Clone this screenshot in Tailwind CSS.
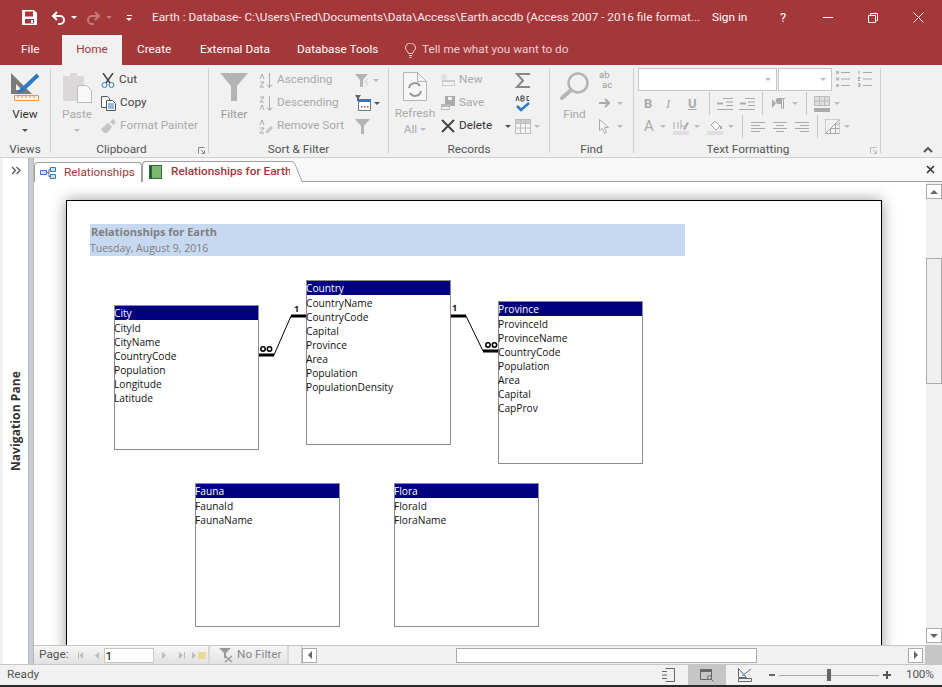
<!DOCTYPE html>
<html lang="en">

<head>
    <meta charset="UTF-8" />
    <title>Earth : Database</title>
    <script src="https://cdn.jsdelivr.net/npm/@tailwindcss/browser@4"></script>
</head>

<body class="w-[942px] h-[687px] overflow-hidden flex flex-col bg-[#f1f1f1] font-['Roboto',sans-serif] text-[11.8px] text-[#444]">
    <!-- Title bar -->
    <header class="h-[35px] shrink-0 bg-[#a4373a] text-white flex items-center">
        <div class="w-[152px] flex items-center shrink-0">
            <svg class="ml-[22px] w-[15px] h-[15px]" viewBox="0 0 15 15"><path fill="#fff" d="M0 0h12l3 3v12H0z"/><path fill="#a4373a" d="M3 1.500h8v5H3zM3 9h9v4.500H3z"/><path fill="#fff" d="M9 10h2v3H9z"/></svg>
            <svg class="ml-[14px] w-[15px] h-[14px]" viewBox="0 0 15 14" fill="none" stroke="#fff" stroke-width="2"><path d="M6 1 2 5l4 4"/><path d="M2 5h7a4 4 0 0 1 0 8H7"/></svg>
            <span class="ml-[5px] w-0 h-0 border-x-[3px] border-x-transparent border-t-[3px] border-t-white"></span>
            <svg class="ml-[9px] w-[15px] h-[14px]" viewBox="0 0 15 14" fill="none" stroke="#c47a7c" stroke-width="2"><path d="m9 1 4 4-4 4"/><path d="M13 5H6a4 4 0 0 0 0 8h2"/></svg>
            <span class="ml-[5px] w-0 h-0 border-x-[3px] border-x-transparent border-t-[3px] border-t-[#c47a7c]"></span>
            <span class="ml-[14px] flex flex-col items-center gap-[2px]"><span class="w-[5px] h-px bg-white"></span><span class="w-0 h-0 border-x-[3px] border-x-transparent border-t-[3px] border-t-white"></span></span>
        </div>
        <div class="w-[560px] shrink-0 whitespace-nowrap text-[#f7e9e9]">Earth : Database- C:\Users\Fred\Documents\Data\Access\Earth.accdb (Access 2007 - 2016 file format...</div>
        <div class="w-[68px] shrink-0">Sign in</div>
        <div class="w-[43px] shrink-0 text-[13px]">?</div>
        <div class="w-[45px] shrink-0"><div class="w-[10px] h-px bg-white"></div></div>
        <svg class="w-[10px] h-[10px] shrink-0 mr-[35px]" viewBox="0 0 10 10" fill="none" stroke="#fff"><path d="M.5 2.500h7v7h-7zM2.500 2.500v-2h7v7h-2"/></svg>
        <svg class="w-[11px] h-[11px] shrink-0" viewBox="0 0 11 11" fill="none" stroke="#fff"><path d="m.5.500 10 10M10.500.5l-10 10"/></svg>
    </header>

    <!-- Tabs -->
    <nav class="h-[30px] shrink-0 bg-[#a4373a] text-white flex items-center">
        <div class="w-[62px] pl-[21px]">File</div>
        <div class="w-[60px] h-[30px] flex items-center justify-center bg-[#f1f1f1] text-[#a4373a]">Home</div>
        <div class="w-[78px] pl-[15px]">Create</div>
        <div class="w-[97px]">External Data</div>
        <div class="w-[108px]">Database Tools</div>
        <div class="flex items-center text-[#ecd0d1]">
            <svg class="w-[11px] h-[15px] mr-[6px]" viewBox="0 0 11 15" fill="none" stroke="#f3dcdc"><path d="M3.500 10.500C3 8 .5 7.500.5 5a5 5 0 0 1 10 0c0 2.500-2.500 3-3 5.500zM4 12.500h3M4.500 14.500h2"/></svg>
            Tell me what you want to do
        </div>
    </nav>

    <!-- Ribbon -->
    <section class="h-[93px] shrink-0 flex pt-[3px] pb-[4px] border-b border-[#d0d0d0] relative">
        <!-- Views -->
        <div class="w-[51px] shrink-0 pt-[1px] flex flex-col items-center border-r border-[#d0d0d0] text-[#333]">
            <svg class="w-[30px] h-[30px] mt-[3px]" viewBox="0 0 30 30"><path fill="#7a7a7a" d="M1 1v21h21z"/><path fill="#f1f1f1" d="M6 12v6h6z"/><path fill="none" stroke="#2b79c2" stroke-width="4" d="m28 3-17 16"/><path fill="#2b79c2" d="m8 19 3-3 2 3-5 3z"/><path fill="none" stroke="#e8994a" d="M4.500 23.500h24v5h-24zM8 24v2M12 24v2M16 24v2M20 24v2M24 24v2"/></svg>
            <div class="mt-[4px] leading-[16px]">View</div>
            <span class="mt-[7px] w-0 h-0 border-x-[3px] border-x-transparent border-t-[3px] border-t-[#555]"></span>
            <div class="mt-auto -mb-[4px] leading-[16px] text-[#555]">Views</div>
        </div>

        <!-- Clipboard -->
        <div class="w-[158px] shrink-0 pt-[1px] flex flex-col border-r border-[#d0d0d0] relative">
            <div class="flex flex-1 text-[#aaa]">
                <div class="w-[50px] flex flex-col items-center pl-[2px]">
                    <svg class="w-[29px] h-[30px] mt-[4px]" viewBox="0 0 29 30"><path fill="#dcd7d8" d="M0 3h7V0h7v3h7v25H0z"/><path fill="#f8f8f8" stroke="#bbb" d="M14.500 12.500h9l5 5v12h-14z"/></svg>
                    <div class="mt-[3px] leading-[16px]">Paste</div>
                    <span class="mt-[7px] w-0 h-0 border-x-[3px] border-x-transparent border-t-[3px] border-t-[#bbb]"></span>
                </div>
                <div class="flex flex-col pt-[3px] gap-[7px]">
                    <div class="h-[16px] flex items-center gap-[4px] text-[#444]">
                        <svg class="w-[14px] h-[15px]" viewBox="0 0 14 15" fill="none"><path stroke="#444" stroke-width="1.500" d="m2 0 7 10M12 0 5 10"/><circle cx="3.500" cy="12" r="2.500" stroke="#2b79c2"/><circle cx="10.500" cy="12" r="2.500" stroke="#2b79c2"/></svg>Cut
                    </div>
                    <div class="h-[16px] flex items-center gap-[4px] text-[#444]">
                        <svg class="w-[15px] h-[15px]" viewBox="0 0 15 15" fill="none" stroke="#555"><path fill="#fff" d="M.5.500h6l2 2v9h-8z"/><path fill="#fff" d="M5.500 4.500h6l3 3v7h-9z"/><path stroke="#2b79c2" d="M7 8h6M7 10h6M7 12h6"/></svg>Copy
                    </div>
                    <div class="h-[16px] flex items-center gap-[4px]">
                        <svg class="w-[15px] h-[14px]" viewBox="0 0 15 14"><path fill="#c4c4c4" d="M0 10 7 4l4 4-5 6H3zM9 3l3-3 3 3-3 3z"/></svg>Format Painter
                    </div>
                </div>
            </div>
            <div class="-mb-[4px] leading-[16px] text-center text-[#555] pr-[16px]">Clipboard</div>
            <svg class="absolute right-[3px] -bottom-[1px] w-[7px] h-[7px]" viewBox="0 0 7 7" fill="none" stroke="#888"><path d="M.5 6.500v-6h6M3 3l3.500 3.500M6.500 3.500v3h-3"/></svg>
        </div>

        <!-- Sort & Filter -->
        <div class="w-[180px] shrink-0 pt-[1px] flex flex-col border-r border-[#d0d0d0] text-[#aaa]">
            <div class="flex flex-1">
                <div class="w-[50px] flex flex-col items-center">
                    <svg class="w-[28px] h-[28px] mt-[4px]" viewBox="0 0 28 28"><path fill="#b4b4b4" d="M0 0h28L17 13v15h-6V13z"/></svg>
                    <div class="mt-[5px] leading-[16px] text-[#999]">Filter</div>
                </div>
                <div class="w-[96px] flex flex-col pt-[3px] gap-[7px]">
                    <div class="h-[16px] flex items-center gap-[4px]">
                        <svg class="w-[14px] h-[15px]" viewBox="0 0 14 15" fill="none" stroke="#aaa"><path d="M1 6 3 1l2 5M1 9h4L1 14h4M10.500 0v14M8 11.500l2.500 3 2.500-3"/></svg>Ascending
                    </div>
                    <div class="h-[16px] flex items-center gap-[4px]">
                        <svg class="w-[14px] h-[15px]" viewBox="0 0 14 15" fill="none" stroke="#aaa"><path d="M1 1h4L1 6h4M1 14l2-5 2 5M10.500 0v14M8 11.500l2.500 3 2.500-3"/></svg>Descending
                    </div>
                    <div class="h-[16px] flex items-center gap-[4px]">
                        <svg class="w-[14px] h-[15px]" viewBox="0 0 14 15" fill="none" stroke="#aaa"><path d="M1 6 3 1l2 5M1 9h4l-4 5h4"/><path fill="#c4c4c4" stroke="none" d="m7 12 5-5 2 2-5 5H7z"/></svg>Remove Sort
                    </div>
                </div>
                <div class="flex flex-col pt-[3px] gap-[7px]">
                    <div class="h-[16px] flex items-center gap-[3px]">
                        <svg class="w-[15px] h-[15px]" viewBox="0 0 15 15"><path fill="#b4b4b4" d="M0 1h13L8 7v7H5V7z"/><path fill="#ddd" d="m10 7 3-2-1 4h2l-4 6 1-5H9z"/></svg>
                        <span class="w-0 h-0 border-x-[3px] border-x-transparent border-t-[3px] border-t-[#bbb]"></span>
                    </div>
                    <div class="h-[16px] flex items-center gap-[3px]">
                        <svg class="w-[16px] h-[16px]" viewBox="0 0 16 16"><path fill="#666" d="M0 0h6L4 3v3H2V3z"/><path fill="#fff" stroke="#777" d="M3.500 5.500h12v10h-12z"/><path fill="#2b79c2" d="M3 4h13v3H3z"/><path fill="#666" d="M6 11h1.500v1.500H6zM9 11h1.500v1.500H9zM12 11h1.500v1.500H12z"/></svg>
                        <span class="w-0 h-0 border-x-[3px] border-x-transparent border-t-[3px] border-t-[#555]"></span>
                    </div>
                    <div class="h-[16px] flex items-center">
                        <svg class="w-[15px] h-[15px]" viewBox="0 0 15 15"><path fill="#b4b4b4" d="M0 0h15L9 7v8H6V7z"/></svg>
                    </div>
                </div>
            </div>
            <div class="-mb-[4px] leading-[16px] text-center text-[#555]">Sort &amp; Filter</div>
        </div>

        <!-- Records -->
        <div class="w-[161px] shrink-0 pt-[1px] flex flex-col border-r border-[#d0d0d0] text-[#aaa]">
            <div class="flex flex-1">
                <div class="w-[52px] flex flex-col items-center">
                    <svg class="w-[24px] h-[30px] mt-[3px]" viewBox="0 0 24 30" fill="none" stroke="#b4b4b4"><path d="M.5.500h14l9 9v19H.5z" fill="#f6f6f6"/><path d="M14.500.5v9h9"/><path stroke-width="2" stroke="#999" d="M6 16a6 6 0 0 1 11-2M18 19a6 6 0 0 1-11 2"/></svg>
                    <div class="mt-[3px] leading-[16px]">Refresh</div>
                    <div class="leading-[16px] flex items-center gap-[3px]">All<span class="w-0 h-0 border-x-[3px] border-x-transparent border-t-[3px] border-t-[#bbb]"></span></div>
                </div>
                <div class="w-[74px] flex flex-col pt-[3px] gap-[7px]">
                    <div class="h-[16px] flex items-center gap-[4px]">
                        <svg class="w-[14px] h-[14px]" viewBox="0 0 14 14"><path fill="#ccc" d="M1 7h13v6H1z"/><path fill="#f1f1f1" d="M2 9h11v3H2z"/><path fill="#ddd" d="M3 0l1 2 2-1-1 2 2 1-2 1 1 2-2-1-1 2-1-2-2 1 1-2-2-1 2-1-1-2 2 1z"/></svg>New
                    </div>
                    <div class="h-[16px] flex items-center gap-[4px]">
                        <svg class="w-[14px] h-[15px]" viewBox="0 0 14 15"><path fill="#aaa" d="M4 0h10v10H4z"/><path fill="#f1f1f1" d="M7 1h4v3H7z"/><path fill="#bbb" d="M0 8h9v6H0z"/><path fill="#f1f1f1" d="M1 11h7v2H1z"/></svg>Save
                    </div>
                    <div class="h-[16px] flex items-center gap-[4px] text-[#333]">
                        <svg class="w-[14px] h-[14px]" viewBox="0 0 14 14" fill="none" stroke="#444" stroke-width="2"><path d="m1 1 12 12M13 1 1 13"/></svg>Delete
                        <span class="ml-[9px] w-0 h-0 border-x-[3px] border-x-transparent border-t-[3px] border-t-[#555]"></span>
                    </div>
                </div>
                <div class="flex flex-col pt-[3px] gap-[7px]">
                    <div class="h-[16px] flex items-center">
                        <svg class="w-[15px] h-[15px]" viewBox="0 0 15 15" fill="none" stroke="#888" stroke-width="2"><path d="M15 2V1H2l6 6.500L2 14h13v-1"/></svg>
                    </div>
                    <div class="h-[16px] flex items-center">
                        <svg class="w-[15px] h-[18px]" viewBox="0 0 15 18" fill="none"><path stroke="#2b79c2" stroke-width="2.500" d="m2 12 4 4 8-7"/><path stroke="#444" d="M1 7l1.500-5L4 7M6 2v5h2a1 1 0 0 0 0-2.500H6 8a1 1 0 0 0 0-2.500zM14 2.500h-2v4h2"/></svg>
                    </div>
                    <div class="h-[16px] flex items-center gap-[3px]">
                        <svg class="w-[16px] h-[15px]" viewBox="0 0 16 15" fill="#f6f6f6" stroke="#bbb"><path d="M.5.500h15v14H.5z"/><path fill="#ccc" d="M.5.500h15v4H.5z"/><path d="M.5 9h15M5.500.5v14M10.500.5v14"/></svg>
                        <span class="w-0 h-0 border-x-[3px] border-x-transparent border-t-[3px] border-t-[#bbb]"></span>
                    </div>
                </div>
            </div>
            <div class="-mb-[4px] leading-[16px] text-center text-[#555]">Records</div>
        </div>

        <!-- Find -->
        <div class="w-[84px] shrink-0 pt-[1px] flex flex-col border-r border-[#d0d0d0] text-[#aaa]">
            <div class="flex flex-1">
                <div class="w-[49px] flex flex-col items-center">
                    <svg class="w-[29px] h-[28px] mt-[3px]" viewBox="0 0 29 28" fill="none" stroke="#b4b4b4"><circle cx="18" cy="11" r="9.500" stroke-width="2.500"/><path stroke-width="4" stroke-linecap="round" d="m10 19-8 7"/></svg>
                    <div class="mt-[6px] leading-[16px]">Find</div>
                </div>
                <div class="flex flex-col pt-[3px] gap-[7px]">
                    <div class="h-[16px] flex flex-col justify-center text-[#999] text-[9.500px] leading-[10px]"><span>ab</span><span class="pl-[3px]">ac</span></div>
                    <div class="h-[16px] flex items-center gap-[6px]">
                        <svg class="w-[12px] h-[10px]" viewBox="0 0 12 10" fill="none" stroke="#aaa" stroke-width="2"><path d="M0 5h10M6 1l4 4-4 4"/></svg>
                        <span class="w-0 h-0 border-x-[3px] border-x-transparent border-t-[3px] border-t-[#bbb]"></span>
                    </div>
                    <div class="h-[16px] flex items-center gap-[6px]">
                        <svg class="w-[10px] h-[15px]" viewBox="0 0 10 15" fill="#f6f6f6" stroke="#aaa"><path d="M.5.500v11l3-2 2 5 2-1-2-5h4z"/></svg>
                        <span class="ml-[2px] w-0 h-0 border-x-[3px] border-x-transparent border-t-[3px] border-t-[#bbb]"></span>
                    </div>
                </div>
            </div>
            <div class="-mb-[4px] leading-[16px] text-center text-[#555]">Find</div>
        </div>

        <!-- Text Formatting -->
        <div class="w-[247px] shrink-0 flex flex-col border-r border-[#d0d0d0] text-[#aaa] relative">
            <div class="flex flex-col flex-1 pl-[4px]">
                <div class="flex items-start">
                    <div class="w-[139px] h-[23px] bg-white border border-[#c6c6c6] flex items-center justify-end pr-[5px]"><span class="w-0 h-0 border-x-[3px] border-x-transparent border-t-[3px] border-t-[#bbb]"></span></div>
                    <div class="ml-[1px] w-[54px] h-[23px] bg-white border border-[#c6c6c6] flex items-center justify-end pr-[5px]"><span class="w-0 h-0 border-x-[3px] border-x-transparent border-t-[3px] border-t-[#bbb]"></span></div>
                    <svg class="ml-[4px] mt-[3px] w-[14px] h-[16px]" viewBox="0 0 14 16" fill="none" stroke="#aaa"><path d="M5 1.500h9M5 8h9M5 14.500h9"/><path stroke-width="3" stroke="#bbb" stroke-dasharray="3 3.500" d="M1.500 0v16"/></svg>
                    <svg class="ml-[8px] mt-[3px] w-[14px] h-[16px]" viewBox="0 0 14 16" fill="none" stroke="#aaa"><path d="M5 1.500h9M5 8h9M5 14.500h9M1 0v3M0 6.500h2v1H0v2h2M0 12.500h2v3H0M0 14h2"/></svg>
                </div>
                <div class="flex items-center h-[23px] mt-[1px] pl-[6px] font-bold text-[13px] text-[#aaa]">
                    <span class="w-[22px]">B</span><span class="w-[22px] italic font-normal font-['Liberation_Serif',serif]">I</span><span class="w-[21px] underline">U</span>
                    <span class="w-px h-[23px] bg-[#c6c6c6] mr-[7px]"></span>
                    <svg class="w-[16px] h-[12px] mr-[6px]" viewBox="0 0 16 12" fill="none" stroke="#aaa"><path d="M6 .5h10M9 4h7M9 7.500h7M0 11.500h16"/><path stroke-width="2" d="M0 5.500h6"/></svg>
                    <svg class="w-[16px] h-[12px] mr-[7px]" viewBox="0 0 16 12" fill="none" stroke="#aaa"><path d="M6 .5h10M9 4h7M9 7.500h7M0 11.500h16"/><path stroke-width="2" d="M1 5.500h6"/></svg>
                    <span class="w-px h-[23px] bg-[#c6c6c6] mr-[9px]"></span>
                    <svg class="w-[13px] h-[11px] mr-[7px]" viewBox="0 0 13 11"><path fill="#aaa" d="m0 1 4 4.500L0 10zM6 0h7v1h-1v10h-1V1h-1v10H9V6H7.500A3 3 0 0 1 6 0"/></svg>
                    <span class="mr-[8px] w-0 h-0 border-x-[3px] border-x-transparent border-t-[3px] border-t-[#bbb]"></span>
                    <span class="w-px h-[23px] bg-[#c6c6c6] mr-[7px]"></span>
                    <svg class="w-[16px] h-[16px] mr-[4px]" viewBox="0 0 16 16" fill="#ddd" stroke="#bbb"><path d="M.5.500h15v9H.5zM5.500.5v9M10.500.5v9M.5 5h15"/><path fill="#aaa" stroke="none" d="M0 12h16v4H0z"/></svg>
                    <span class="w-0 h-0 border-x-[3px] border-x-transparent border-t-[3px] border-t-[#bbb]"></span>
                </div>
                <div class="flex items-center h-[23px] pl-[6px] text-[#aaa]">
                    <span class="w-[16px] text-[15px]">A</span>
                    <span class="mr-[7px] w-0 h-0 border-x-[3px] border-x-transparent border-t-[3px] border-t-[#bbb]"></span>
                    <svg class="w-[16px] h-[16px] mr-[5px]" viewBox="0 0 16 16"><path fill="#e2dde2" d="M0 12h16v4H0z"/><path fill="none" stroke="#aaa" d="M1 10V3m4 7V3M8 1v9M8 7h3"/><path fill="#aaa" d="m10 10 4-7 2 1-4 7z"/></svg>
                    <span class="mr-[7px] w-0 h-0 border-x-[3px] border-x-transparent border-t-[3px] border-t-[#bbb]"></span>
                    <svg class="w-[16px] h-[16px] mr-[5px]" viewBox="0 0 16 16"><path fill="#e2dde2" d="M0 12h16v4H0z"/><path fill="#fff" stroke="#aaa" d="m8 2 5 5-4 4-5-5z"/><path fill="#aaa" d="M13 7h2v3h-2z"/></svg>
                    <span class="mr-[8px] w-0 h-0 border-x-[3px] border-x-transparent border-t-[3px] border-t-[#bbb]"></span>
                    <span class="w-px h-[23px] bg-[#c6c6c6] mr-[8px]"></span>
                    <svg class="w-[14px] h-[10px] mr-[8px]" viewBox="0 0 14 10" fill="none" stroke="#aaa"><path d="M0 .5h14M0 3.500h9M0 6.500h14M0 9.500h9"/></svg>
                    <svg class="w-[14px] h-[10px] mr-[8px]" viewBox="0 0 14 10" fill="none" stroke="#aaa"><path d="M0 .5h14M3 3.500h8M0 6.500h14M3 9.500h8"/></svg>
                    <svg class="w-[14px] h-[10px] mr-[8px]" viewBox="0 0 14 10" fill="none" stroke="#aaa"><path d="M0 .5h14M5 3.500h9M0 6.500h14M5 9.500h9"/></svg>
                    <span class="w-px h-[23px] bg-[#c6c6c6] mr-[7px]"></span>
                    <svg class="w-[15px] h-[15px] mr-[4px]" viewBox="0 0 15 15" fill="none" stroke="#aaa"><path stroke-dasharray="1 1" d="M.5.500h14M14.500.5v14M.5.500v14"/><path d="M.5 14.500h14M.5 14.500l14-14M5.500 9.500v5M10.500 5v9.500M5.500 9.500h9M10.500 5h4"/></svg>
                    <span class="w-0 h-0 border-x-[3px] border-x-transparent border-t-[3px] border-t-[#bbb]"></span>
                </div>
            </div>
            <div class="-mb-[4px] leading-[16px] text-center text-[#555] pr-[18px]">Text Formatting</div>
            <svg class="absolute right-[3px] -bottom-[1px] w-[7px] h-[7px]" viewBox="0 0 7 7" fill="none" stroke="#bbb"><path d="M.5 6.500v-6h6M3 3l3.500 3.500M6.500 3.500v3h-3"/></svg>
        </div>
        <svg class="absolute right-[9px] bottom-[4px] w-[10px] h-[6px]" viewBox="0 0 10 6" fill="none" stroke="#555" stroke-width="2"><path d="m1 5 4-4 4 4"/></svg>
    </section>

    <!-- Workspace -->
    <div class="h-[506px] shrink-0 flex">
        <!-- Navigation pane -->
        <aside class="w-[34px] shrink-0 flex">
            <div class="ml-[3px] w-[26px] bg-white border-r border-[#b4b8bc] flex flex-col items-center">
                <svg class="mt-[8px] w-[10px] h-[9px]" viewBox="0 0 10 9" fill="none" stroke="#555" stroke-width="1.300"><path d="m1 1 3.500 3.500L1 8M5.500 1 9 4.500 5.500 8"/></svg>
                <div class="flex-1 flex items-center pt-[4px]">
                    <span class="[writing-mode:vertical-rl] rotate-180 font-['Open_Sans',sans-serif] text-[12px] font-bold text-[#333] tracking-[.1px] whitespace-nowrap">Navigation Pane</span>
                </div>
            </div>
            <div class="flex-1 bg-[#c9cdd2] border-r border-[#b4b8bc]"></div>
        </aside>

        <div class="flex-1 flex flex-col min-w-0">
            <!-- Object tabs -->
            <div class="h-[24px] shrink-0 bg-[#f8f8f8] border-b border-[#a0a0a0] flex items-end relative">
                <div class="w-[108px] h-[20px] -mb-px bg-white border border-b-0 border-[#a0a0a0] rounded-t-[4px] flex items-center pl-[5px] gap-[8px] text-[#a4373a] whitespace-nowrap">
                    <svg class="w-[16px] h-[12px] shrink-0" viewBox="0 0 16 12" fill="none" stroke="#3b78b5"><path fill="#cfe0f0" d="M.5 3.500h6v4h-6zM10.500.5h5v4h-5zM10.500 7.500h5v4h-5z"/><path stroke="#666" d="M7 5.500h2v-3h1M9 5.500v4h1"/></svg>
                    Relationships
                </div>
                <div class="w-[151px] h-[21px] -mb-px bg-white border-t border-l border-[#a0a0a0] rounded-tl-[4px] flex items-center pl-[6px] gap-[9px] text-[#a4373a] font-medium whitespace-nowrap relative">
                    <svg class="w-[13px] h-[14px] shrink-0" viewBox="0 0 13 14"><path fill="#2f6d3a" d="M0 0h13v14H0z"/><path fill="#7cb76f" d="M3 1h9v12H3z"/><path fill="#1f4d2a" d="M1 1h1v12H1z"/></svg>
                    Relationships for Earth
                    <svg class="absolute -right-[10px] -top-px w-[13px] h-[21px]" viewBox="0 0 13 21" fill="#fff" stroke="#a0a0a0"><path d="M0 .5h1c3 0 4 2 5 5l6 15.500H0z" stroke="none"/><path fill="none" d="M0 .5h1c3 0 4 2 5 5l6 15"/></svg>
                </div>
                <svg class="absolute right-[7px] top-[7px] w-[9px] h-[9px]" viewBox="0 0 9 9" fill="none" stroke="#333" stroke-width="1.600"><path d="m1 1 7 7M8 1 1 8"/></svg>
            </div>

            <div class="h-[463px] flex">
                <!-- Report canvas -->
                <div class="w-[892px] h-full bg-white overflow-hidden pt-[18px] pl-[32px]">
                    <div class="relative w-[816px] h-[470px] bg-white border border-black shadow-[0_0_14px_rgba(0,0,0,0.4)] font-['Open_Sans',sans-serif] text-[10.2px] text-[#111] indent-[-1px]">
                        <div class="absolute left-[23px] top-[23px] w-[595px] h-[32px] bg-[#c6d9f1] text-[#7f7f7f] leading-[16px] indent-0">
                            <div class="font-bold text-[11px] pl-[1px]">Relationships for Earth</div>
                            <div class="text-[10.5px]">Tuesday, August 9, 2016</div>
                        </div>

                        <!-- relationship lines -->
                        <svg class="absolute left-0 top-0 w-[816px] h-[470px]" viewBox="0 0 816 470" fill="none" stroke="#000">
                            <path stroke-width="3" d="M192 154h15M224 115h16M384 115h15M416 150h16"/>
                            <path d="M207 154l17-39M399 115l17 35"/>
                            <g stroke-width="1.500"><circle cx="196" cy="148" r="2.200"/><circle cx="202.500" cy="148" r="2.200"/><circle cx="421" cy="144" r="2.200"/><circle cx="427.500" cy="144" r="2.200"/></g>
                        </svg>
                        <span class="absolute left-[228px] top-[103px] font-bold text-[9px] leading-[10px]">1</span>
                        <span class="absolute left-[386px] top-[102px] font-bold text-[9px] leading-[10px]">1</span>

                        <!-- City -->
                        <div class="absolute left-[47px] top-[104px] w-[145px] h-[145px] bg-white border border-[#8c8c8c] leading-[14px]">
                            <div class="h-[14px] mb-px bg-[#000080] text-white">City</div>
                            <div>CityId</div><div>CityName</div><div>CountryCode</div><div>Population</div><div>Longitude</div><div>Latitude</div>
                        </div>
                        <!-- Country -->
                        <div class="absolute left-[239px] top-[79px] w-[145px] h-[165px] bg-white border border-[#8c8c8c] leading-[14px]">
                            <div class="h-[14px] mb-px bg-[#000080] text-white">Country</div>
                            <div>CountryName</div><div>CountryCode</div><div>Capital</div><div>Province</div><div>Area</div><div>Population</div><div>PopulationDensity</div>
                        </div>
                        <!-- Province -->
                        <div class="absolute left-[431px] top-[100px] w-[145px] h-[163px] bg-white border border-[#8c8c8c] leading-[14px]">
                            <div class="h-[14px] mb-px bg-[#000080] text-white">Province</div>
                            <div>ProvinceId</div><div>ProvinceName</div><div>CountryCode</div><div>Population</div><div>Area</div><div>Capital</div><div>CapProv</div>
                        </div>
                        <!-- Fauna -->
                        <div class="absolute left-[128px] top-[282px] w-[145px] h-[144px] bg-white border border-[#8c8c8c] leading-[14px]">
                            <div class="h-[14px] mb-px bg-[#000080] text-white">Fauna</div>
                            <div>FaunaId</div><div>FaunaName</div>
                        </div>
                        <!-- Flora -->
                        <div class="absolute left-[327px] top-[282px] w-[145px] h-[144px] bg-white border border-[#8c8c8c] leading-[14px]">
                            <div class="h-[14px] mb-px bg-[#000080] text-white">Flora</div>
                            <div>FloraId</div><div>FloraName</div>
                        </div>
                    </div>
                </div>

                <!-- Vertical scrollbar -->
                <div class="w-[16px] h-full bg-[#f1f1f1] flex flex-col">
                    <div class="h-[15px] mt-[2px] bg-white border border-[#ababab] flex items-center justify-center"><span class="w-0 h-0 border-x-[4px] border-x-transparent border-b-[4px] border-b-[#666]"></span></div>
                    <div class="h-[59px]"></div>
                    <div class="h-[126px] bg-[#efefef] border border-[#ababab]"></div>
                    <div class="flex-1"></div>
                    <div class="h-[15px] mb-[2px] bg-white border border-[#ababab] flex items-center justify-center"><span class="w-0 h-0 border-x-[4px] border-x-transparent border-t-[4px] border-t-[#666]"></span></div>
                </div>
            </div>

            <!-- Record navigation and horizontal scrollbar -->
            <div class="h-[19px] flex border-t border-[#c6c6c6] text-[#555]">
                <div class="w-[176px] flex items-center pl-[5px] bg-gradient-to-b from-[#f6f6f6] to-[#e2e2e2] border-r-2 border-[#d8d8d8] shrink-0">
                    <span>Page:</span>
                    <svg class="ml-[9px] w-[22px] h-[7px] shrink-0" viewBox="0 0 22 7" fill="#bbb"><path d="M0 0h1v7H0zM5 0v7L1.500 3.500zM21 0v7l-4-3.500z"/></svg>
                    <div class="ml-[4px] w-[50px] h-[15px] bg-white border border-[#c6c6c6] text-black leading-[14px] pl-[1px]">1</div>
                    <svg class="ml-[8px] w-[46px] h-[9px] shrink-0" viewBox="0 0 46 9" fill="#bbb"><path d="m0 1 4 3.500L0 8zM17 1l4 3.500-4 3.500zM22 1h1v7h-1zM30 1l4 3.500L30 8z"/><path fill="#eadb9a" d="M36 1h8v7h-8z"/></svg>
                </div>
                <div class="w-[79px] flex items-center pl-[8px] gap-[3px] bg-gradient-to-b from-[#f6f6f6] to-[#e2e2e2] border-r-2 border-[#d8d8d8] shrink-0 text-[#888]">
                    <svg class="w-[16px] h-[16px]" viewBox="0 0 16 16" fill="none"><path fill="#999" d="M1 1h12L8 6v5H6V6z"/><path stroke="#999" stroke-width="1.500" d="m7 9 7 6M14 9l-7 6"/></svg>
                    No Filter
                </div>
                <div class="w-[13px] bg-[#f1f1f1] border-r border-[#c6c6c6] shrink-0"></div>
                <div class="flex-1 flex items-center bg-[#f1f1f1] pr-[2px]">
                    <div class="w-[15px] h-[15px] bg-white border border-[#ababab] flex items-center justify-center"><span class="w-0 h-0 border-y-[4px] border-y-transparent border-r-[4px] border-r-[#666]"></span></div>
                    <div class="ml-[139px] w-[301px] h-[15px] bg-white border border-[#ababab]"></div>
                    <div class="ml-auto w-[15px] h-[15px] bg-white border border-[#ababab] flex items-center justify-center"><span class="w-0 h-0 border-y-[4px] border-y-transparent border-l-[4px] border-l-[#666]"></span></div>
                </div>
                <div class="w-[17px] bg-[#c6c6c6] shrink-0"></div>
            </div>
        </div>
    </div>

    <!-- Status bar -->
    <footer class="h-[21px] shrink-0 bg-[#f1f1f1] border-t border-[#c6c6c6] flex items-center text-[#555] pl-[7px]">
        <span class="w-[655px] shrink-0">Ready</span>
        <svg class="w-[14px] h-[14px]" viewBox="0 0 14 14" fill="none" stroke="#666"><path d="M3.500.5h9v13h-9M0 3.500h5M0 7h5M0 10.500h5"/></svg>
        <div class="ml-[12px] w-[38px] h-[20px] bg-[#c6c6c6] flex items-center justify-center"><svg class="w-[14px] h-[14px]" viewBox="0 0 14 14" fill="none" stroke="#666"><path d="M.5 1.500h11v10h-11z"/><path stroke-width="2" d="M0 3h12"/><circle cx="9.500" cy="9.500" r="2" fill="#c6c6c6"/><path d="m11 11 2.500 2.500"/></svg></div>
        <svg class="ml-[12px] w-[14px] h-[14px]" viewBox="0 0 14 14" fill="none" stroke="#666"><path d="M.5.500v9h8z"/><path stroke="#3b78b5" d="m4 8 9-7"/><path d="M.5 10.500h13v3H.5z"/></svg>
        <span class="ml-[17px] w-[6px] h-[2px] bg-[#666]"></span>
        <div class="ml-[4px] w-[100px] h-[12px] flex items-center relative"><div class="w-full h-px bg-[#aaa]"></div><span class="absolute left-[48px] w-[4px] h-[12px] bg-[#666]"></span></div>
        <svg class="ml-[4px] w-[8px] h-[8px]" viewBox="0 0 8 8" fill="#555"><path d="M3 0h2v3h3v2H5v3H3V5H0V3h3z"/></svg>
        <span class="ml-[15px] tracking-[-.2px]">100%</span>
    </footer>
    <div class="flex-1 bg-[#2a2a2a]"></div>
</body>

</html>
